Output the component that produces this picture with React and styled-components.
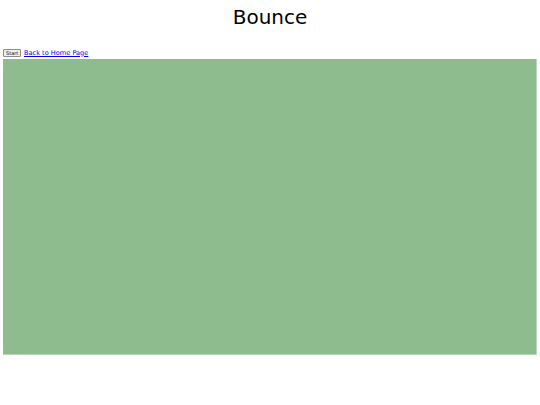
import React from "react";
import styled, { createGlobalStyle } from "styled-components";

const Global = createGlobalStyle`
  html, body { margin: 0; padding: 0; background: #fff; }
  body { font-family: "DejaVu Sans", Verdana, sans-serif; }
`;

const Page = styled.div`
  padding: 0 3px;
`;

const Title = styled.h1`
  margin: 0;
  padding-top: 5px;
  height: 46px;
  box-sizing: border-box;
  text-align: center;
  font-family: "DejaVu Sans", Verdana, sans-serif;
  font-weight: normal;
  font-size: 20px;
  line-height: 25px;
  color: #000;
`;

const Controls = styled.div`
  display: flex;
  align-items: center;
  gap: 3px;
  height: 13px;
`;

const Button = styled.button`
  font-family: "DejaVu Sans", Verdana, sans-serif;
  font-size: 5px;
  line-height: 5px;
  padding: 1px 2px;
  width: 18px;
  height: 8px;
  border: 1px solid #8a8a8a;
  border-radius: 1px;
  background: #efefef;
  color: #000;
  margin: 0;
`;

const Link = styled.a`
  font-family: "DejaVu Sans", Verdana, sans-serif;
  font-size: 6.6px;
  color: #0000ee;
  text-decoration: underline;
`;

const Canvas = styled.div`
  width: 534px;
  height: 296px;
  box-sizing: border-box;
  background: #8fbc8f;
  border-bottom: 1px solid #b8d6b8;
  border-right: 1px solid #b8d6b8;
`;

export default function App() {
  return (
    <>
      <Global />
      <Page>
        <Title>Bounce</Title>
        <Controls>
          <Button>Start</Button>
          <Link href="#">Back to Home Page</Link>
        </Controls>
        <Canvas />
      </Page>
    </>
  );
}
